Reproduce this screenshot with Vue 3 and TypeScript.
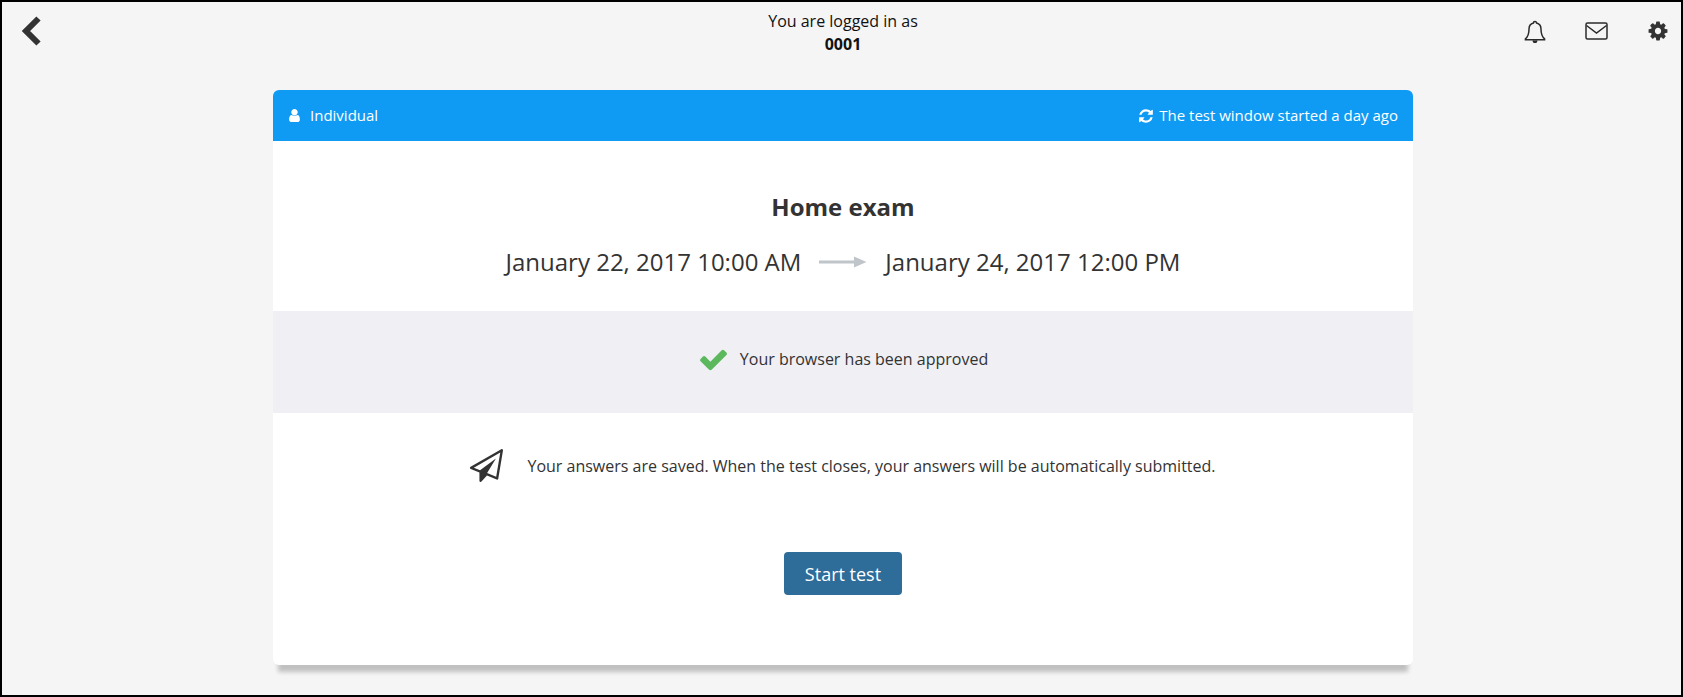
<script setup lang="ts">
const cogPath =
  'M1152 896q0-106-75-181t-181-75-181 75-75 181 75 181 181 75 181-75 75-181zm512-109v222q0 12-8 23t-20 13l-185 28q-19 54-39 91 35 50 107 138 10 12 10 25t-9 23q-27 37-99 108t-94 71q-12 0-26-9l-138-108q-44 23-91 38-16 136-29 186-7 28-36 28h-222q-14 0-24.5-8.5t-11.5-21.5l-28-184q-49-16-90-37l-141 107q-10 9-25 9-14 0-25-11-126-114-165-168-7-10-7-23 0-12 8-23 15-21 51-66.5t54-70.5q-27-50-41-99l-183-27q-13-2-21-12.5t-8-23.5v-222q0-12 8-23t19-13l186-28q14-46 39-92-40-57-107-138-10-12-10-24 0-10 9-23 26-36 98.5-107.5t94.5-71.5q13 0 26 10l138 107q44-23 91-38 16-136 29-186 7-28 36-28h222q14 0 24.5 8.5t11.5 21.5l28 184q49 16 90 37l142-107q9-9 24-9 13 0 25 10 129 119 165 170 7 8 7 22 0 12-8 23-15 21-51 66.5t-54 70.5q26 50 41 98l183 28q13 2 21 12.5t8 23.5z'
const userPath =
  'M1536 1399q0 109-62.5 187t-150.5 78h-854q-88 0-150.5-78t-62.5-187q0-85 8.5-160.5t31.5-152 58.5-131 94-89 134.5-34.5q131 128 313 128t313-128q76 0 134.5 34.5t94 89 58.5 131 31.5 152 8.5 160.5zm-256-887q0 159-112.5 271.5t-271.5 112.5-271.5-112.5-112.5-271.5 112.5-271.5 271.5-112.5 271.5 112.5 112.5 271.5z'
const refreshPath =
  'M1639 1056q0 5-1 7-64 268-268 434.5t-478 166.5q-146 0-282.5-55t-243.5-157l-129 129q-19 19-45 19t-45-19-19-45v-448q0-26 19-45t45-19h448q26 0 45 19t19 45-19 45l-137 137q71 66 161 102t187 36q134 0 250-65t186-179q11-17 53-117 8-23 30-23h192q13 0 22.5 9.5t9.5 22.5zm25-800v448q0 26-19 45t-45 19h-448q-26 0-45-19t-19-45 19-45l138-138q-148-137-349-137-134 0-250 65t-186 179q-11 17-53 117-8 23-30 23h-199q-13 0-22.5-9.5t-9.5-22.5v-7q65-268 270-434.5t480-166.5q146 0 284 55.5t245 156.5l130-129q19-19 45-19t45 19 19 45z'
const checkPath =
  'M1671 566q0 40-28 68l-724 724-136 136q-28 28-68 28t-68-28l-136-136-362-362q-28-28-28-68t28-68l136-136q28-28 68-28t68 28l294 295 656-657q28-28 68-28t68 28l136 136q28 28 28 68z'
const planePath =
  'M1764 11q33 24 27 64l-256 1536q-5 29-32 45-14 8-31 8-11 0-24-5l-527-215-298 327q-18 21-47 21-14 0-23-4-19-7-30-23.5t-11-36.5v-452l-472-193q-37-14-40-55-3-39 32-59l1664-960q35-21 68 2zm-342 1499l221-1323-1434 827 336 137 863-639-478 797z'
</script>

<template>
  <div class="frame">
    <header class="topbar">
      <a class="back">
        <svg width="22" height="32" viewBox="0 0 22 32">
          <polyline points="18.500,3.500 6,16 18.500,28.500" fill="none" stroke="#333" stroke-width="6" />
        </svg>
      </a>
      <div class="login">
        <div>You are logged in as</div>
        <strong>0001</strong>
      </div>
      <div class="actions">
        <svg class="bell" width="22" height="24" viewBox="0 0 22 24" fill="none" stroke="#2b2b2b" stroke-width="1.5">
          <path d="M11 1.500c-1 0-1.600.7-1.600 1.600C6.600 3.800 5 6 5 9.200c0 5.300-1.200 7.600-3.600 9.600v.9h19.200v-.9C18.200 16.800 17 14.500 17 9.200c0-3.200-1.600-5.400-4.400-6.100 0-.9-.6-1.600-1.600-1.600z" />
          <path d="M9.300 20.500c0 1 .7 1.800 1.700 1.800s1.700-.8 1.700-1.800" fill="#2b2b2b" />
        </svg>
        <svg class="mail" width="23" height="18" viewBox="0 0 23 18" fill="none" stroke="#2b2b2b" stroke-width="1.500">
          <rect x="1" y="1" width="21" height="16" rx="1.500" />
          <path d="M1.500 3.500l10 7.500 10-7.500" />
        </svg>
        <svg class="cog" width="22" height="22" viewBox="0 0 1792 1792"><path :d="cogPath" fill="#333" /></svg>
      </div>
    </header>

    <main class="card">
      <div class="card-head">
        <span class="head-item">
          <svg width="15" height="15" viewBox="0 0 1792 1792"><path :d="userPath" fill="#fff" /></svg>
          <span class="head-label">Individual</span>
        </span>
        <span class="head-item">
          <svg width="16" height="16" viewBox="0 0 1792 1792"><path :d="refreshPath" fill="#fff" /></svg>
          <span>The test window started a day ago</span>
        </span>
      </div>

      <section class="summary">
        <h1>Home exam</h1>
        <div class="dates">
          <span>January 22, 2017 10:00 AM</span>
          <svg width="48" height="12" viewBox="0 0 48 12">
            <path d="M0 6h38" stroke="#c0c5ca" stroke-width="3" />
            <path d="M35 .5L47.500 6 35 11.500z" fill="#c0c5ca" />
          </svg>
          <span>January 24, 2017 12:00 PM</span>
        </div>
      </section>

      <section class="browser">
        <svg width="31" height="31" viewBox="0 0 1792 1792"><path :d="checkPath" fill="#5cb85c" /></svg>
        <span>Your browser has been approved</span>
      </section>

      <section class="submit">
        <div class="note">
          <svg width="33" height="33" viewBox="0 0 1792 1792"><path :d="planePath" fill="#333" /></svg>
          <span>Your answers are saved. When the test closes, your answers will be automatically submitted.</span>
        </div>
        <button class="start" type="button">Start test</button>
      </section>
    </main>
  </div>
</template>

<style>
html,
body {
  margin: 0;
  background: #f5f5f5;
}
</style>

<style scoped>
.frame {
  box-sizing: border-box;
  height: 697px;
  border: 2px solid #000;
  background: #f5f5f5;
  color: #333;
  font-family: 'Open Sans', 'Noto Sans', sans-serif;
  font-size: 16px;
  overflow: hidden;
}

.topbar {
  display: grid;
  grid-template-columns: 1fr auto 1fr;
  height: 88px;
  padding-top: 10px;
  box-sizing: border-box;
}

.back {
  padding: 3px 0 0 18px;
}

.login {
  margin-top: -2px;
  text-align: center;
  color: #111;
  line-height: 23px;
  padding-left: 3px;
}

.actions {
  display: flex;
  justify-content: flex-end;
  align-items: flex-start;
  gap: 39px;
  padding: 8px 12px 0 0;
}

.mail {
  margin-top: 2px;
}

.card {
  width: 1140px;
  margin-left: 271px;
  height: 575px;
  background: #fff;
  border-radius: 6px;
  box-shadow: 0 12px 4px -5px #c0c0c0;
}

.card-head {
  display: flex;
  justify-content: space-between;
  align-items: center;
  height: 51px;
  padding: 0 15px 0 14px;
  background: #0f9af3;
  color: #fff;
  border-radius: 6px 6px 0 0;
  font-size: 15px;
  line-height: 49px;
}

.head-item {
  display: flex;
  align-items: center;
  gap: 5px;
}

.head-label {
  margin-left: 3px;
}

.summary {
  height: 170px;
  padding-top: 51px;
  box-sizing: border-box;
  text-align: center;
}

h1 {
  margin: 0;
  font-size: 24px;
  font-weight: 700;
  line-height: 30px;
}

.dates {
  display: flex;
  justify-content: center;
  align-items: center;
  gap: 18px;
  margin-top: 23px;
  font-size: 24px;
  line-height: 34px;
}

.browser {
  display: flex;
  justify-content: center;
  align-items: center;
  gap: 11px;
  box-sizing: border-box;
  height: 102px;
  padding-bottom: 6px;
  background: #efeff4;
}

.submit {
  display: flex;
  flex-direction: column;
  align-items: center;
}

.note {
  display: flex;
  align-items: center;
  gap: 24px;
  margin-top: 36px;
}

.start {
  margin-top: 70px;
  width: 118px;
  height: 43px;
  border: 0;
  border-radius: 4px;
  background: #2e6c99;
  color: #fff;
  font: 18px 'Open Sans', 'Noto Sans', sans-serif;
}
</style>
